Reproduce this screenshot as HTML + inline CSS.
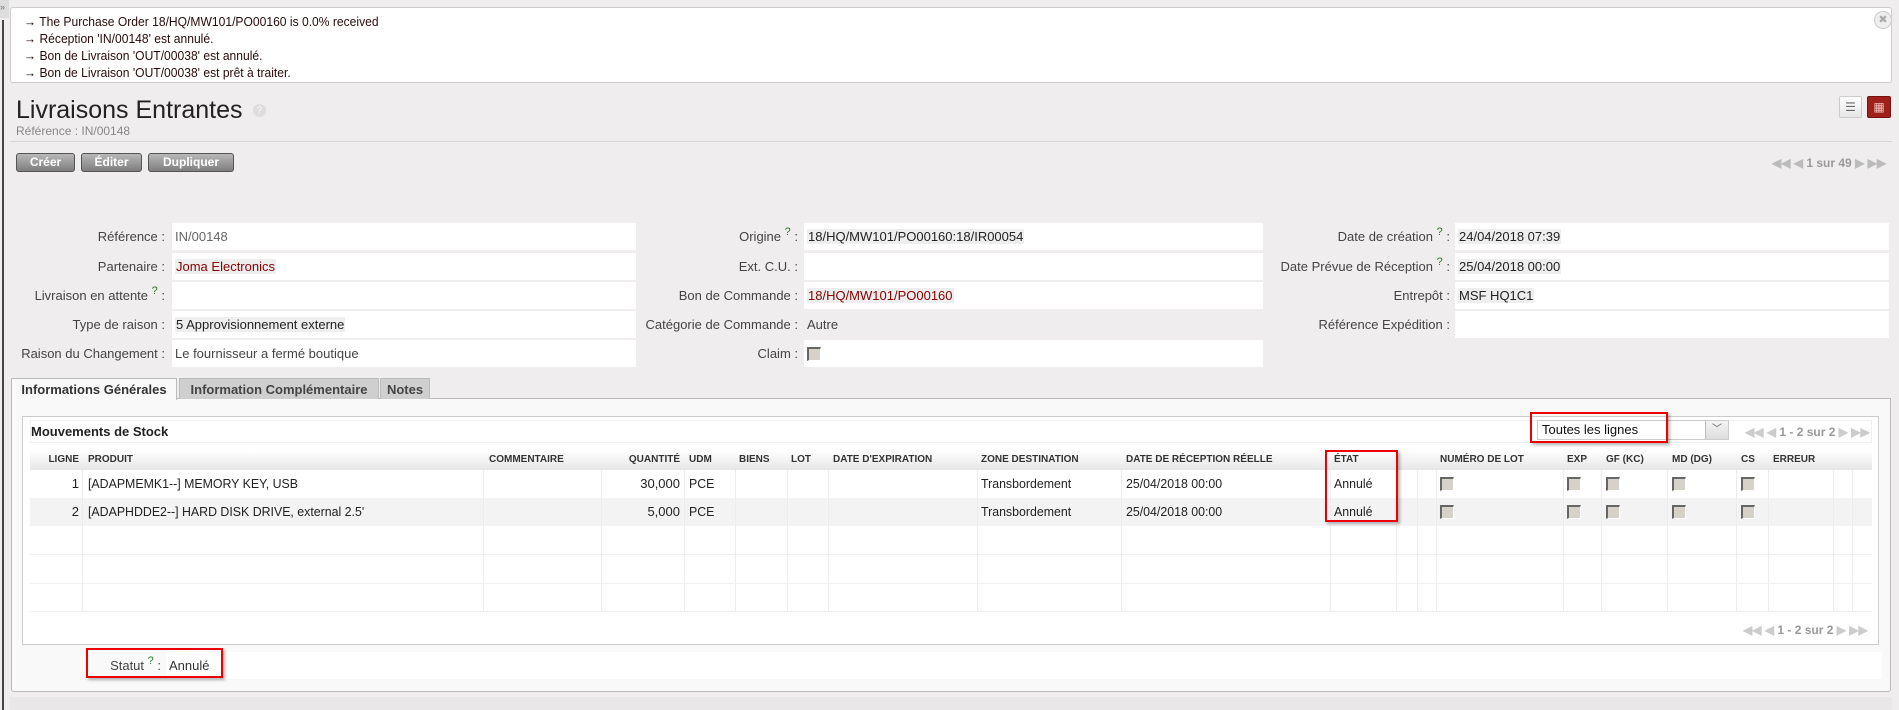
<!DOCTYPE html>
<html><head><meta charset="utf-8">
<style>
*{box-sizing:border-box;margin:0;padding:0}
body{width:1899px;height:710px;background:#efeded;font-family:"Liberation Sans",Arial,sans-serif;font-size:13px;color:#333;position:relative;overflow:hidden}
.a{position:absolute}
.msg{left:10px;top:7px;width:1882px;height:76px;background:#fff;border:1px solid #ccc;border-radius:3px}
.msg div{position:absolute;left:13px;font-size:13px;color:#2a0b0b;line-height:16px;transform:scaleX(.93);transform-origin:left}
.btn{top:153px;height:19px;border:1px solid #555;border-radius:3px;background:linear-gradient(#b8b8b8,#7e7e7e);color:#fff;font-weight:bold;font-size:12px;text-align:center;line-height:17px}
.lbl{text-align:right;color:#444;font-size:13px;line-height:27px;height:27px}
.fld{background:#fff;height:27px;line-height:27px;padding-left:3px;font-size:13px;color:#222}
.hl{background:#eee;padding:0 1px}
.red{color:#8b0000}
.q{color:#2a7a2a;font-size:11px;vertical-align:top;position:relative;top:-4px}
.tab{top:378px;height:21px;line-height:21px;font-size:13px;font-weight:bold;text-align:center;border:1px solid #bbb;border-bottom:none}
.th{top:450px;height:20px;line-height:20px;font-size:10px;font-weight:bold;color:#333;white-space:nowrap}
.td{height:28px;line-height:28px;font-size:13px;color:#222;white-space:nowrap;transform:scaleX(.95);transform-origin:left}
.cb{width:14px;height:14px;background:#d6d2ca;border-top:2px solid #666;border-left:2px solid #666;border-right:1px solid #fff;border-bottom:1px solid #fff}
.vl{width:1px;background:#ececec;top:470px;height:141px}
.pg{color:#999;font-weight:bold;font-size:12px}
.rb{border:2px solid #e00;box-shadow:2px 2px 3px rgba(0,0,0,.3)}
</style></head><body>
<div class="a" style="left:2px;top:20px;width:2px;height:690px;background:#444"></div>
<div class="a" style="left:0;top:0;width:9px;height:18px;background:#ddd;font-size:9px;color:#777;line-height:14px">»</div>
<div class="a msg">
<div style="top:6px">→ The Purchase Order 18/HQ/MW101/PO00160 is 0.0% received</div>
<div style="top:23px">→ Réception 'IN/00148' est annulé.</div>
<div style="top:40px">→ Bon de Livraison 'OUT/00038' est annulé.</div>
<div style="top:57px">→ Bon de Livraison 'OUT/00038' est prêt à traiter.</div>
<div style="left:1863px;top:3px;width:18px;height:18px;border-radius:50%;background:#eee;border:1px solid #ccc;color:#aaa;font-size:11px;text-align:center;line-height:16px;transform:none">✖</div>
</div>
<div class="a" style="left:16px;top:95px;font-size:25px;color:#222;line-height:30px">Livraisons Entrantes</div>
<div class="a" style="left:253px;top:104px;width:13px;height:13px;border-radius:50%;background:#ddd;color:#fff;font-size:9px;text-align:center;line-height:13px">?</div>
<div class="a" style="left:16px;top:124px;font-size:12px;color:#888">Référence : IN/00148</div>
<div class="a" style="left:1839px;top:96px;width:23px;height:22px;background:linear-gradient(#fff,#e6e6e6);border:1px solid #ccc;border-radius:2px;color:#666;font-size:12px;text-align:center;line-height:20px">☰</div>
<div class="a" style="left:1867px;top:96px;width:24px;height:22px;background:#a0201a;border:1px solid #711;border-radius:2px;color:#f4c0c0;font-size:12px;text-align:center;line-height:20px">▦</div>
<div class="a" style="left:10px;top:141px;width:1882px;height:1px;background:#d8d6d6"></div>
<div class="a btn" style="left:16px;width:59px">Créer</div>
<div class="a btn" style="left:81px;width:61px">Éditer</div>
<div class="a btn" style="left:148px;width:86px">Dupliquer</div>
<div class="a pg" style="left:1772px;top:156px;color:#bbb">◀◀ ◀ <span style="color:#999">1 sur 49</span> ▶ ▶▶</div>

<div class="a lbl" style="left:10px;width:155px;top:223px">Référence :</div><div class="a fld" style="left:172px;width:464px;top:223px;color:#666">IN/00148</div>
<div class="a lbl" style="left:10px;width:155px;top:253px">Partenaire :</div><div class="a fld" style="left:172px;width:464px;top:253px"><span class="hl red">Joma Electronics</span></div>
<div class="a lbl" style="left:10px;width:155px;top:282px">Livraison en attente <span class="q">?</span> :</div><div class="a fld" style="left:172px;width:464px;top:282px"></div>
<div class="a lbl" style="left:10px;width:155px;top:311px">Type de raison :</div><div class="a fld" style="left:172px;width:464px;top:311px"><span class="hl">5 Approvisionnement externe</span></div>
<div class="a lbl" style="left:10px;width:155px;top:340px">Raison du Changement :</div><div class="a fld" style="left:172px;width:464px;top:340px;color:#444">Le fournisseur a fermé boutique</div>
<div class="a lbl" style="left:600px;width:198px;top:223px">Origine <span class="q">?</span> :</div><div class="a fld" style="left:804px;width:459px;top:223px"><span class="hl">18/HQ/MW101/PO00160:18/IR00054</span></div>
<div class="a lbl" style="left:600px;width:198px;top:253px">Ext. C.U. :</div><div class="a fld" style="left:804px;width:459px;top:253px"></div>
<div class="a lbl" style="left:600px;width:198px;top:282px">Bon de Commande :</div><div class="a fld" style="left:804px;width:459px;top:282px"><span class="hl red">18/HQ/MW101/PO00160</span></div>
<div class="a lbl" style="left:600px;width:198px;top:311px">Catégorie de Commande :</div><div class="a fld" style="left:804px;width:459px;top:311px;background:none;color:#444">Autre</div>
<div class="a lbl" style="left:600px;width:198px;top:340px">Claim :</div><div class="a fld" style="left:804px;width:459px;top:340px"><div class="a cb" style="left:3px;top:7px"></div></div>
<div class="a lbl" style="left:1250px;width:200px;top:223px">Date de création <span class="q">?</span> :</div><div class="a fld" style="left:1455px;width:434px;top:223px"><span class="hl">24/04/2018 07:39</span></div>
<div class="a lbl" style="left:1250px;width:200px;top:253px">Date Prévue de Réception <span class="q">?</span> :</div><div class="a fld" style="left:1455px;width:434px;top:253px"><span class="hl">25/04/2018 00:00</span></div>
<div class="a lbl" style="left:1250px;width:200px;top:282px">Entrepôt :</div><div class="a fld" style="left:1455px;width:434px;top:282px"><span class="hl">MSF HQ1C1</span></div>
<div class="a lbl" style="left:1250px;width:200px;top:311px">Référence Expédition :</div><div class="a fld" style="left:1455px;width:434px;top:311px"></div>

<div class="a" style="left:11px;top:398px;width:1880px;height:294px;background:#f9f9f9;border:1px solid #bbb;border-radius:0 0 3px 3px"></div>
<div class="a tab" style="left:11px;width:166px;background:#f9f9f9;color:#333;height:22px">Informations Générales</div>
<div class="a tab" style="left:179px;width:200px;background:#cfcfcf;color:#444">Information Complémentaire</div>
<div class="a tab" style="left:380px;width:50px;background:#cfcfcf;color:#444">Notes</div>

<div class="a" style="left:22px;top:416px;width:1857px;height:229px;background:#fff;border:1px solid #ccc"></div>
<div class="a" style="left:30px;top:420px;width:1842px;height:23px;border:1px solid #f0f0f0"></div>
<div class="a" style="left:31px;top:420px;font-weight:bold;font-size:13px;color:#222;line-height:23px">Mouvements de Stock</div>
<div class="a" style="left:1537px;top:420px;width:192px;height:20px;border:1px solid #ccc;background:#fff;font-size:13px;line-height:18px;padding-left:4px;color:#111">Toutes les lignes</div>
<div class="a" style="left:1705px;top:421px;width:23px;height:18px;background:linear-gradient(#f4f4f4,#ddd);border-left:1px solid #bbb;color:#555;font-size:10px;text-align:center;line-height:18px">﹀</div>
<div class="a rb" style="left:1530px;top:412px;width:138px;height:31px"></div>
<div class="a pg" style="left:1745px;top:425px;color:#ccc">◀◀ ◀ <span style="color:#999">1 - 2 sur 2</span> ▶ ▶▶</div>

<div class="a" style="left:30px;top:450px;width:1842px;height:20px;background:linear-gradient(#fff,#e6e6e6)"></div>
<div class="a" style="left:30px;top:498px;width:1842px;height:28px;background:#f3f3f3"></div>
<div class="a" style="left:30px;top:554px;width:1842px;height:1px;background:#f0f0f0"></div>
<div class="a" style="left:30px;top:583px;width:1842px;height:1px;background:#f0f0f0"></div>
<div class="a" style="left:30px;top:611px;width:1842px;height:1px;background:#eee"></div>
<div class="a vl" style="left:82px"></div><div class="a vl" style="left:483px"></div><div class="a vl" style="left:601px"></div><div class="a vl" style="left:684px"></div><div class="a vl" style="left:735px"></div><div class="a vl" style="left:787px"></div><div class="a vl" style="left:828px"></div><div class="a vl" style="left:977px"></div><div class="a vl" style="left:1121px"></div><div class="a vl" style="left:1330px"></div><div class="a vl" style="left:1396px"></div><div class="a vl" style="left:1417px"></div><div class="a vl" style="left:1436px"></div><div class="a vl" style="left:1563px"></div><div class="a vl" style="left:1601px"></div><div class="a vl" style="left:1667px"></div><div class="a vl" style="left:1736px"></div><div class="a vl" style="left:1768px"></div><div class="a vl" style="left:1833px"></div><div class="a vl" style="left:1852px"></div>

<div class="a th" style="left:40px;width:39px;text-align:right">LIGNE</div>
<div class="a th" style="left:88px">PRODUIT</div>
<div class="a th" style="left:489px">COMMENTAIRE</div>
<div class="a th" style="left:600px;width:80px;text-align:right">QUANTITÉ</div>
<div class="a th" style="left:689px">UDM</div>
<div class="a th" style="left:739px">BIENS</div>
<div class="a th" style="left:791px">LOT</div>
<div class="a th" style="left:833px">DATE D'EXPIRATION</div>
<div class="a th" style="left:981px">ZONE DESTINATION</div>
<div class="a th" style="left:1126px">DATE DE RÉCEPTION RÉELLE</div>
<div class="a th" style="left:1334px">ÉTAT</div>
<div class="a th" style="left:1440px">NUMÉRO DE LOT</div>
<div class="a th" style="left:1567px">EXP</div>
<div class="a th" style="left:1606px">GF (KC)</div>
<div class="a th" style="left:1672px">MD (DG)</div>
<div class="a th" style="left:1741px">CS</div>
<div class="a th" style="left:1773px">ERREUR</div>

<div class="a td" style="top:470px;left:40px;width:39px;text-align:right;transform:none">1</div>
<div class="a td" style="top:470px;left:88px">[ADAPMEMK1--] MEMORY KEY, USB</div>
<div class="a td" style="top:470px;left:600px;width:80px;text-align:right;transform:none">30,000</div>
<div class="a td" style="top:470px;left:689px">PCE</div>
<div class="a td" style="top:470px;left:981px">Transbordement</div>
<div class="a td" style="top:470px;left:1126px">25/04/2018 00:00</div>
<div class="a td" style="top:470px;left:1334px">Annulé</div>
<div class="a td" style="top:498px;left:40px;width:39px;text-align:right;transform:none">2</div>
<div class="a td" style="top:498px;left:88px">[ADAPHDDE2--] HARD DISK DRIVE, external 2.5'</div>
<div class="a td" style="top:498px;left:600px;width:80px;text-align:right;transform:none">5,000</div>
<div class="a td" style="top:498px;left:689px">PCE</div>
<div class="a td" style="top:498px;left:981px">Transbordement</div>
<div class="a td" style="top:498px;left:1126px">25/04/2018 00:00</div>
<div class="a td" style="top:498px;left:1334px">Annulé</div>
<div class="a cb" style="left:1440px;top:477px"></div><div class="a cb" style="left:1567px;top:477px"></div><div class="a cb" style="left:1606px;top:477px"></div><div class="a cb" style="left:1672px;top:477px"></div><div class="a cb" style="left:1741px;top:477px"></div>
<div class="a cb" style="left:1440px;top:505px"></div><div class="a cb" style="left:1567px;top:505px"></div><div class="a cb" style="left:1606px;top:505px"></div><div class="a cb" style="left:1672px;top:505px"></div><div class="a cb" style="left:1741px;top:505px"></div>
<div class="a rb" style="left:1325px;top:450px;width:73px;height:72px"></div>
<div class="a pg" style="left:1743px;top:623px;color:#ccc">◀◀ ◀ <span style="color:#999">1 - 2 sur 2</span> ▶ ▶▶</div>

<div class="a" style="left:30px;top:652px;width:1852px;height:27px;background:#fff"></div>
<div class="a" style="left:30px;top:652px;width:136px;height:27px;background:#f9f9f9"></div>
<div class="a lbl" style="left:86px;width:75px;top:652px">Statut <span class="q">?</span> :</div>
<div class="a fld" style="left:166px;width:60px;top:652px;color:#333">Annulé</div>
<div class="a rb" style="left:86px;top:648px;width:137px;height:30px"></div>
<div class="a" style="left:10px;top:697px;width:1882px;height:13px;background:#e9e7e7"></div>
</body></html>
